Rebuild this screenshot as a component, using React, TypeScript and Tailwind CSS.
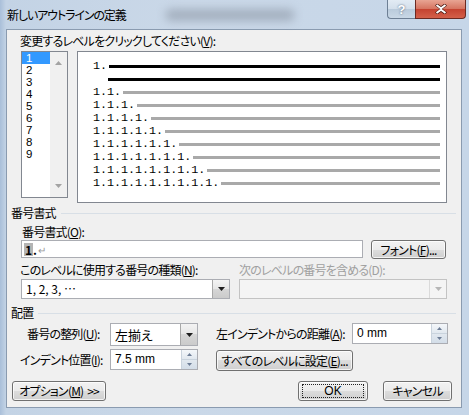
import React from "react";

const btn =
  "flex items-center justify-center whitespace-nowrap rounded-[3px] border border-[#707070] bg-[linear-gradient(#f2f2f2_0%,#ebebeb_50%,#dddddd_50%,#cfcfcf_100%)] shadow-[inset_0_0_0_1px_rgba(255,255,255,0.75)] text-[12px] leading-[14px] text-black";

function DropArrow({ disabled }: { disabled?: boolean }) {
  return (
    <svg width="7" height="4" viewBox="0 0 7 4">
      <path d="M0 0H7L3.5 4Z" fill={disabled ? "#b6b6b6" : "#1e1e1e"} />
    </svg>
  );
}

function ComboButton({ disabled }: { disabled?: boolean }) {
  return (
    <div
      className={`flex w-[17px] items-center justify-center border-l ${
        disabled
          ? "border-[#dadada] bg-[#f4f4f4]"
          : "border-[#a8a8a8] bg-[linear-gradient(#f3f3f3_0%,#e6e6e6_50%,#d6d6d6_50%,#cbcbcb_100%)]"
      }`}
    >
      <DropArrow disabled={disabled} />
    </div>
  );
}

function Spin() {
  return (
    <div className="flex w-[16px] flex-col border-l border-[#c9d3dd]">
      <div className="flex flex-1 items-center justify-center bg-[linear-gradient(#f4f7fa,#e1e8ef)]">
        <svg width="5" height="3" viewBox="0 0 5 3">
          <path d="M0 3H5L2.5 0Z" fill="#6d7d96" />
        </svg>
      </div>
      <div className="flex flex-1 items-center justify-center border-t border-[#c9d3dd] bg-[linear-gradient(#e1e8ef,#d3dde8)]">
        <svg width="5" height="3" viewBox="0 0 5 3">
          <path d="M0 0H5L2.5 3Z" fill="#6d7d96" />
        </svg>
      </div>
    </div>
  );
}

function SectionTitle({ label, className }: { label: string; className?: string }) {
  return (
    <div className={`flex h-[14px] items-center ${className ?? ""}`}>
      <span className="ml-[4px] leading-[14px]">{label}</span>
      <div className="ml-[5px] mr-[5px] h-px flex-1 bg-[#d8dfe6]" />
    </div>
  );
}

const levels = ["1", "2", "3", "4", "5", "6", "7", "8", "9"];

export default function App() {
  const previewRows = [
    { label: "1.", color: "bg-black" },
    { label: "", color: "bg-black" },
    ...[2, 3, 4, 5, 6, 7, 8, 9].map((n) => ({
      label: Array.from({ length: n }, () => "1.").join(""),
      color: "bg-[#a9a9a9]",
    })),
  ];

  return (
    <div className="relative flex h-[415px] w-[469px] flex-col overflow-hidden whitespace-nowrap bg-[linear-gradient(90deg,#a9bfd9_0px,#c3d3e5_6px,#cad8e8_40%,#c6d6e8_100%)] font-['Noto_Sans_CJK_JP',sans-serif] text-[12px] tracking-[-0.8px] text-black [font-feature-settings:'palt']">
      {/* title bar */}
      <div className="relative flex h-[29px] shrink-0">
        <div className="pointer-events-none absolute left-[165px] top-[9px] h-[12px] w-[130px] rounded-full bg-[#7e8896] opacity-50 blur-[5px]" />
        <span className="relative ml-[7px] mt-[7px] text-[12px] leading-[16px] tracking-[-1.1px]">
          新しいアウトラインの定義
        </span>
        <div className="ml-auto mr-[3px] flex h-[19px]">
          <div className="flex w-[28px] items-center justify-center rounded-bl-[4px] border border-t-0 border-r-0 border-[#6d7f94] bg-[linear-gradient(#e2ebf4_0%,#d3dfeb_50%,#b9cadb_50%,#c9d8e6_100%)]">
            <span className="font-['Liberation_Sans',sans-serif] text-[13px] font-bold leading-[13px] tracking-normal text-white [text-shadow:0_0_2px_#41546b]">
              ?
            </span>
          </div>
          <div className="flex w-[51px] items-center justify-center rounded-br-[4px] border border-t-0 border-[#6b2a22] bg-[linear-gradient(#e8a493_0%,#d5735f_50%,#c44230_50%,#d3604a_100%)]">
            <svg width="12" height="10" viewBox="0 0 12 10">
              <path d="M1 0.5L6 4L11 0.5M1 9.5L6 6L11 9.5" stroke="#4a1a12" strokeWidth="3.2" fill="none" />
              <path d="M1.5 1L6 4.2L10.5 1M1.5 9L6 5.8L10.5 9" stroke="#fff" strokeWidth="2" fill="none" />
            </svg>
          </div>
        </div>
      </div>

      {/* client area */}
      <div className="ml-[6px] flex h-[379px] w-[456px] shrink-0 flex-col border border-[#8a9bb0] bg-[#f0f0f0]">
        <div className="ml-[13px] mt-[4px] h-[14px] leading-[14px]">
          変更するレベルをクリックしてください(<span className="underline">V</span>):
        </div>

        <div className="mt-[3px] flex items-start">
          {/* level list */}
          <div className="ml-[14px] flex h-[147px] w-[47px] border border-[#828790] bg-white">
            <div className="flex flex-1 flex-col">
              {levels.map((l, i) => (
                <div
                  key={l}
                  className={`flex h-[12px] items-center overflow-hidden pl-[4px] font-['Liberation_Sans',sans-serif] text-[11.5px] leading-[11px] tracking-normal ${
                    i === 0 ? "bg-[#3399ff] text-white" : "text-black"
                  }`}
                >
                  {l}
                </div>
              ))}
            </div>
            <div className="flex w-[17px] flex-col justify-between bg-[#f0f0f0] py-[9px]">
              <div className="flex justify-center">
                <svg width="7" height="4" viewBox="0 0 7 4">
                  <path d="M0 4H7L3.5 0Z" fill="#a3a3a3" />
                </svg>
              </div>
              <div className="flex justify-center">
                <svg width="7" height="4" viewBox="0 0 7 4">
                  <path d="M0 0H7L3.5 4Z" fill="#a3a3a3" />
                </svg>
              </div>
            </div>
          </div>

          {/* preview */}
          <div className="ml-[9px] flex h-[152px] w-[370px] flex-col border border-[#828790] bg-white pt-[8px] pl-[15px] pr-[6px]">
            {previewRows.map((r, i) => (
              <div key={i} className="flex h-[13px] items-center">
                <span
                  className={`font-['Liberation_Mono',monospace] text-[11.7px] leading-[13px] tracking-normal text-black ${
                    r.label ? "mr-[2px]" : "w-[15px]"
                  }`}
                >
                  {r.label}
                </span>
                <div className={`h-[3px] flex-1 ${r.color}`} />
              </div>
            ))}
          </div>
        </div>

        <SectionTitle label="番号書式" className="mt-[3px]" />

        <div className="ml-[15px] mt-[5px] h-[14px] leading-[14px]">
          番号書式(<span className="underline">O</span>):
        </div>

        <div className="mt-[1px] flex h-[19px] items-start">
          <div className="ml-[14px] flex h-[18px] w-[342px] items-center border border-[#abadb3] bg-white pl-[2px] tracking-normal">
            <span className="bg-[#b4b4b4] px-[1px] font-bold leading-[13px]">1</span>
            <span className="font-bold leading-[13px]">.</span>
            <span className="ml-[1px] text-[10px] leading-[13px] text-[#9a9a9a]">↵</span>
          </div>
          <div className={`${btn} ml-[8px] h-[19px] w-[75px]`}>
            <span>
              フォント(<span className="underline">F</span>)...
            </span>
          </div>
        </div>

        <div className="mt-[4px] flex h-[14px] leading-[14px]">
          <span className="ml-[13px] w-[219px]">
            このレベルに使用する番号の種類(<span className="underline">N</span>):
          </span>
          <span className="text-[#a0a0a0]">次のレベルの番号を含める(D):</span>
        </div>

        <div className="mt-[2px] flex">
          <div className="ml-[14px] flex h-[20px] w-[209px] border border-[#abadb3] bg-white">
            <span className="flex-1 pl-[4px] leading-[18px] tracking-normal">1, 2, 3, …</span>
            <ComboButton />
          </div>
          <div className="ml-[9px] flex h-[20px] w-[208px] border border-[#c3c3c3] bg-[#f4f4f4]">
            <span className="flex-1" />
            <ComboButton disabled />
          </div>
        </div>

        <SectionTitle label="配置" className="mt-[7px]" />

        <div className="mt-[3px] flex h-[23px] items-start">
          <span className="ml-[20px] mt-[4px] w-[83px] leading-[14px]">
            番号の整列(<span className="underline">U</span>):
          </span>
          <div className="flex h-[23px] w-[88px] border border-[#abadb3] bg-white">
            <span className="flex-1 pl-[4px] text-[13px] leading-[21px] tracking-normal">左揃え</span>
            <ComboButton />
          </div>
          <span className="ml-[18px] mt-[4px] w-[136px] leading-[14px]">
            左インデントからの距離(<span className="underline">A</span>):
          </span>
          <div className="flex h-[21px] w-[96px] border border-[#abadb3] bg-white">
            <span className="flex-1 pl-[4px] font-['Liberation_Sans',sans-serif] text-[12px] leading-[19px] tracking-normal">0 mm</span>
            <Spin />
          </div>
        </div>

        <div className="mt-[3px] flex h-[22px] items-start">
          <span className="ml-[13px] mt-[4px] w-[90px] leading-[14px]">
            インデント位置(<span className="underline">I</span>):
          </span>
          <div className="flex h-[21px] w-[88px] border border-[#abadb3] bg-white">
            <span className="flex-1 pl-[4px] font-['Liberation_Sans',sans-serif] text-[12px] leading-[19px] tracking-normal">7.5 mm</span>
            <Spin />
          </div>
          <div className={`${btn} ml-[18px] mt-[1px] h-[21px] w-[137px]`}>
            <span>
              すべてのレベルに設定(<span className="underline">E</span>)...
            </span>
          </div>
        </div>

        <div className="mt-[10px] flex">
          <div className={`${btn} ml-[5px] h-[20px] w-[94px]`}>
            <span>
              オプション(<span className="underline">M</span>)&nbsp;&nbsp;&gt;&gt;
            </span>
          </div>
          <div className={`${btn} ml-[192px] h-[20px] w-[70px] border-[#3c7fb1] shadow-[inset_0_0_0_1px_#a9dcf7]`}>
            <div className="flex h-[14px] w-[62px] items-center justify-center border border-dotted border-[#222]">
              <span className="font-['Liberation_Sans',sans-serif] tracking-normal">OK</span>
            </div>
          </div>
          <div className={`${btn} ml-[15px] h-[20px] w-[69px]`}>
            <span>キャンセル</span>
          </div>
        </div>
      </div>
    </div>
  );
}
